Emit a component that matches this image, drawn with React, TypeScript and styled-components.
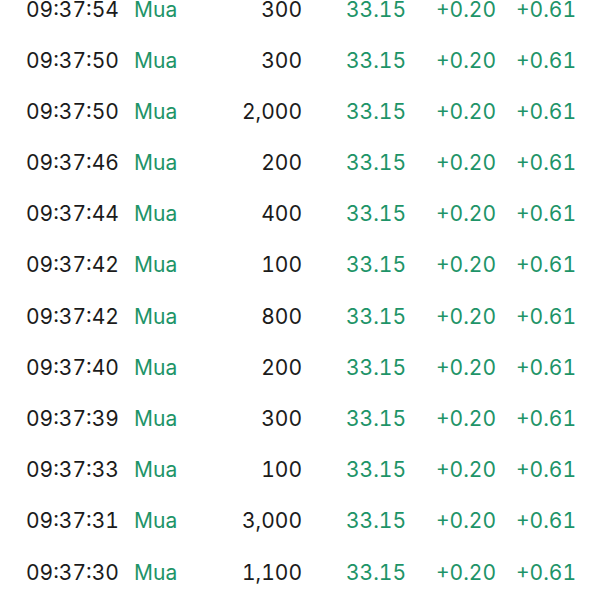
import React from "react";
import styled, { createGlobalStyle } from "styled-components";

const Global = createGlobalStyle`
  html, body { margin: 0; padding: 0; background: #ffffff; }
  body { font-family: Inter, "Noto Sans", "Liberation Sans", sans-serif; }
`;

const Viewport = styled.div`
  width: 600px;
  height: 600px;
  overflow: hidden;
  background: #ffffff;
`;

const List = styled.div`
  display: flex;
  flex-direction: column;
  margin-top: -16.6px;
`;

const Row = styled.div`
  display: grid;
  grid-template-columns: 108px 60px 108px 134px 80px 1fr;
  align-items: center;
  height: 51.2px;
  padding-left: 26px;
  font-size: 21px;
  line-height: 1;
  font-variant-numeric: tabular-nums;
`;

const Cell = styled.span<{ $green?: boolean; $align?: "left" | "right"; $pad?: number }>`
  color: ${(p) => (p.$green ? "#1e9468" : "#1b1b1b")};
  text-align: ${(p) => p.$align ?? "left"};
  padding-left: ${(p) => p.$pad ?? 0}px;
  white-space: nowrap;
`;

const rows: [string, string][] = [
  ["09:37:54", "300"],
  ["09:37:50", "300"],
  ["09:37:50", "2,000"],
  ["09:37:46", "200"],
  ["09:37:44", "400"],
  ["09:37:42", "100"],
  ["09:37:42", "800"],
  ["09:37:40", "200"],
  ["09:37:39", "300"],
  ["09:37:33", "100"],
  ["09:37:31", "3,000"],
  ["09:37:30", "1,100"],
];

export default function App() {
  return (
    <>
      <Global />
      <Viewport>
        <List>
          {rows.map(([t, v], i) => (
            <Row key={i}>
              <Cell>{t}</Cell>
              <Cell $green>Mua</Cell>
              <Cell $align="right">{v}</Cell>
              <Cell $green $pad={44}>33.15</Cell>
              <Cell $green>+0.20</Cell>
              <Cell $green>+0.61</Cell>
            </Row>
          ))}
        </List>
      </Viewport>
    </>
  );
}
